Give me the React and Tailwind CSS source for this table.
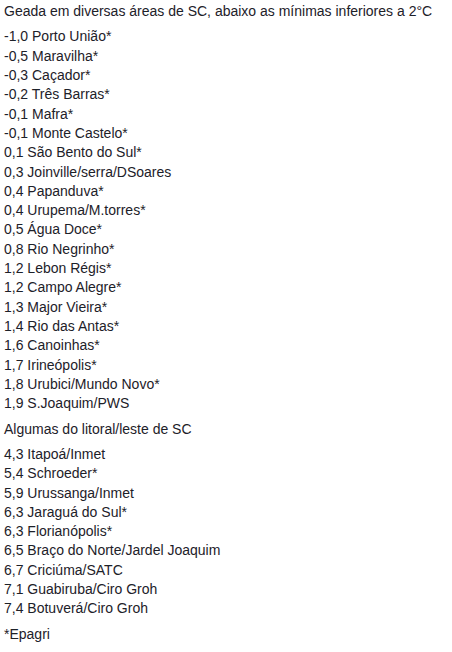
const interior = [
  '-1,0 Porto União*',
  '-0,5 Maravilha*',
  '-0,3 Caçador*',
  '-0,2 Três Barras*',
  '-0,1 Mafra*',
  '-0,1 Monte Castelo*',
  '0,1 São Bento do Sul*',
  '0,3 Joinville/serra/DSoares',
  '0,4 Papanduva*',
  '0,4 Urupema/M.torres*',
  '0,5 Água Doce*',
  '0,8 Rio Negrinho*',
  '1,2 Lebon Régis*',
  '1,2 Campo Alegre*',
  '1,3 Major Vieira*',
  '1,4 Rio das Antas*',
  '1,6 Canoinhas*',
  '1,7 Irineópolis*',
  '1,8 Urubici/Mundo Novo*',
  '1,9 S.Joaquim/PWS',
];

const litoral = [
  '4,3 Itapoá/Inmet',
  '5,4 Schroeder*',
  '5,9 Urussanga/Inmet',
  '6,3 Jaraguá do Sul*',
  '6,3 Florianópolis*',
  '6,5 Braço do Norte/Jardel Joaquim',
  '6,7 Criciúma/SATC',
  '7,1 Guabiruba/Ciro Groh',
  '7,4 Botuverá/Ciro Groh',
];

export default function App() {
  return (
    <div className="w-[452px] h-[652px] bg-white pl-[4px] pt-[2px] text-[14px] leading-[1.38] text-[#1d2129] font-['Liberation_Sans',Arial,sans-serif]">
      <p className="mb-[6px]">Geada em diversas áreas de SC, abaixo as mínimas inferiores a 2°C</p>
      <p className="mb-[6px]">
        {interior.map((l, i) => (
          <span key={i}>{l}{i < interior.length - 1 && <br />}</span>
        ))}
      </p>
      <p className="mb-[6px]">Algumas do litoral/leste de SC</p>
      <p className="mb-[6px]">
        {litoral.map((l, i) => (
          <span key={i}>{l}{i < litoral.length - 1 && <br />}</span>
        ))}
      </p>
      <p>*Epagri</p>
    </div>
  );
}
